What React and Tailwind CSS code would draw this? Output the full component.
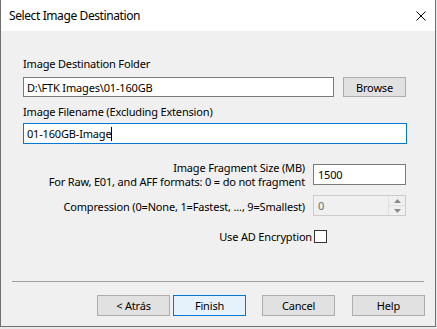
const FONT = { fontFamily: '"Noto Sans", "Segoe UI", sans-serif' };

const WinButton = ({ label, focused = false }) => (
  <button
    className={`w-[73px] h-[21px] text-[11px] tracking-[-0.17px] leading-none flex items-center justify-center border ${
      focused ? 'bg-[#e5f1fb] border-[#0078d7]' : 'bg-[#e1e1e1] border-[#adadad]'
    }`}
  >
    {label}
  </button>
);

const TextBox = ({ value, className = '', active = false, caret = false }) => (
  <div
    className={`h-[21px] bg-white border flex items-center pl-[3px] text-[11px] ${
      active ? 'border-[#0078d7]' : 'border-[#7a7a7a]'
    } ${className}`}
  >
    <span>{value}</span>
    {caret && <span className="w-px h-[14px] bg-black" />}
  </div>
);

export default function App() {
  return (
    <div className="w-[437px] h-[329px] bg-[#e8e8e8] text-black overflow-hidden" style={FONT}>
      <div className="w-[436px] h-[327px] flex flex-col bg-[#f0f0f0] border-l border-r border-b border-[#707070]">
        {/* title bar */}
        <div className="h-[31px] bg-white flex items-center justify-between pl-[8px] pr-[9px] shrink-0">
          <span className="text-[12px] tracking-[-0.4px]">Select Image Destination</span>
          <svg width="10" height="10" viewBox="0 0 10 10" className="mt-[1px]">
            <path d="M0.5 0.5 L9.5 9.5 M9.5 0.5 L0.5 9.5" stroke="#000" strokeWidth="1" />
          </svg>
        </div>

        {/* body */}
        <div className="flex flex-col pl-[22px] pr-[29px] pt-[25px] text-[11px] leading-[15px] tracking-[-0.17px]">
          <span>Image Destination Folder</span>
          <div className="flex items-center mt-[6px]">
            <TextBox value="D:\FTK Images\01-160GB" className="w-[311px] !h-[20px]" />
            <button className="ml-[9px] w-[63px] h-[20px] bg-[#e1e1e1] border border-[#adadad] flex items-center justify-center">
              Browse
            </button>
          </div>

          <span className="mt-[7px]">Image Filename (Excluding Extension)</span>
          <div className="mt-[4px]">
            <TextBox value="01-160GB-Image" className="w-[384px]" active caret />
          </div>

          <div className="flex justify-end items-start h-[21px] mt-[20px]">
            <div className="text-right leading-[14px] -mt-[3px] mr-[8px]">
              <div>Image Fragment Size (MB)</div>
              <div>For Raw, E01, and AFF formats: 0 = do not fragment</div>
            </div>
            <TextBox value="1500" className="w-[93px] pl-[4px]" />
          </div>

          <div className="flex justify-end items-center mt-[10px]">
            <span className="mr-[8px] mt-[1px]">Compression (0=None, 1=Fastest, ..., 9=Smallest)</span>
            <div className="w-[93px] h-[21px] border border-[#cccccc] bg-[#f0f0f0] flex">
              <span className="flex-1 pl-[4px] flex items-center text-[#6d6d6d]">0</span>
              <div className="w-[17px] flex flex-col border-l border-[#e0e0e0]">
                <div className="flex-1 flex items-center justify-center border-b border-[#e0e0e0]">
                  <svg width="7" height="4" viewBox="0 0 7 4"><path d="M3.5 0 L7 4 L0 4 Z" fill="#8a8a8a" /></svg>
                </div>
                <div className="flex-1 flex items-center justify-center">
                  <svg width="7" height="4" viewBox="0 0 7 4"><path d="M0 0 L7 0 L3.5 4 Z" fill="#8a8a8a" /></svg>
                </div>
              </div>
            </div>
          </div>

          <div className="flex justify-end items-center mt-[12px] pr-[79px]">
            <span className="mr-[2px] mt-[1px]">Use AD Encryption</span>
            <div className="w-[13px] h-[13px] bg-white border border-[#333333]" />
          </div>
        </div>

        {/* separator */}
        <div className="mt-auto mx-[11px] h-px bg-[#a0a0a0]" />
        <div className="flex justify-end gap-[3px] pr-[10px] pt-[13px] pb-[10px]">
          <WinButton label="< Atrás" />
          <WinButton label="Finish" focused />
          <div className="w-[10px]" />
          <WinButton label="Cancel" />
          <div className="w-[11px]" />
          <WinButton label="Help" />
        </div>
      </div>
    </div>
  );
}
